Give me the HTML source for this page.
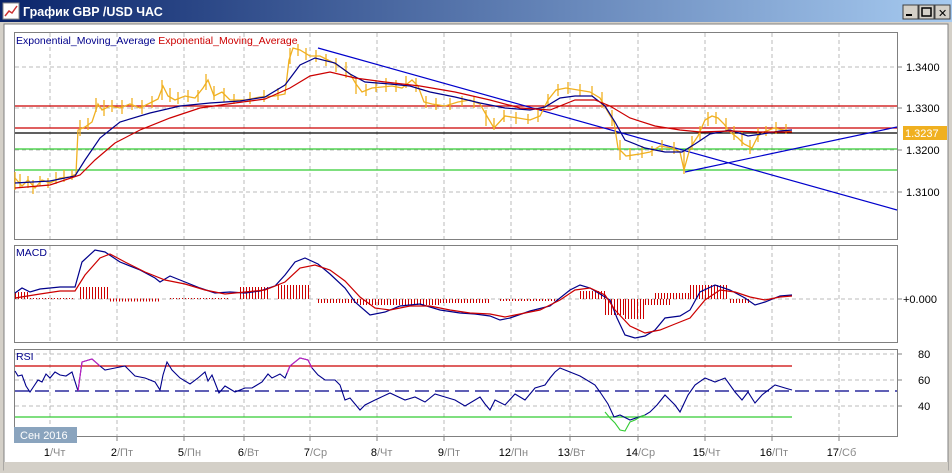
<!DOCTYPE html>
<html><head><meta charset="utf-8"><style>
body{margin:0;width:952px;height:473px;overflow:hidden;background:#d4d0c8;font-family:"Liberation Sans",sans-serif}
svg{position:absolute;left:0;top:0}
</style></head><body>
<svg width="952" height="473" viewBox="0 0 952 473" font-family="Liberation Sans, DejaVu Sans, sans-serif">
<defs><linearGradient id="tb" x1="0" x2="1"><stop offset="0" stop-color="#0a246a"/><stop offset="1" stop-color="#a6caf0"/></linearGradient></defs>
<rect x="0" y="0" width="952" height="473" fill="#d4d0c8"/>
<rect x="0" y="0" width="952" height="22" fill="url(#tb)"/>
<rect x="3" y="3" width="16" height="16" fill="#fff" stroke="#888"/>
<polyline points="5,16 9,11 12,13 17,6" fill="none" stroke="#c33" stroke-width="1.5"/>
<text x="23" y="16" fill="#fff" font-size="12.5" font-weight="bold">График GBP /USD  ЧАС</text>
<g font-size="11" font-weight="bold"><rect x="903" y="5" width="15" height="14" fill="#d4d0c8" stroke="#404040"/><rect x="906" y="14" width="6" height="2" fill="#000"/>
<rect x="919" y="5" width="15" height="14" fill="#d4d0c8" stroke="#404040"/><rect x="922" y="8" width="9" height="8" fill="none" stroke="#000" stroke-width="1.5"/>
<rect x="935" y="5" width="15" height="14" fill="#d4d0c8" stroke="#404040"/><text x="938" y="17">✕</text></g>
<rect x="4" y="24" width="944" height="446" fill="#fff" stroke="#808080"/>
<rect x="4" y="462" width="944" height="11" fill="#d4d0c8"/>
<g fill="#fff" stroke="#808080"><rect x="14.5" y="32.5" width="883" height="207"/><rect x="14.5" y="245.5" width="883" height="97"/><rect x="14.5" y="349.5" width="883" height="87"/></g>
<g stroke="#bbb" stroke-dasharray="4,3">
<path d="M50 33V239M117 33V239M184 33V239M244 33V239M310 33V239M377 33V239M444 33V239M511 33V239M570 33V239M638 33V239M705 33V239M772 33V239M839 33V239"/>
<path d="M50 246V342M117 246V342M184 246V342M244 246V342M310 246V342M377 246V342M444 246V342M511 246V342M570 246V342M638 246V342M705 246V342M772 246V342M839 246V342"/>
<path d="M50 350V436M117 350V436M184 350V436M244 350V436M310 350V436M377 350V436M444 350V436M511 350V436M570 350V436M638 350V436M705 350V436M772 350V436M839 350V436"/>
<path d="M15 67H897M15 108H897M15 150H897M15 192H897M15 299H897M15 354H897M15 380H897M15 406H897"/>
</g>
<g stroke="#808080"><path d="M897 67h5M897 108h5M897 150h5M897 192h5M897 299h5M897 354h5M897 380h5M897 406h5"/>
<path d="M50 437v4M117 437v4M184 437v4M244 437v4M310 437v4M377 437v4M444 437v4M511 437v4M570 437v4M638 437v4M705 437v4M772 437v4M839 437v4"/></g>
<g stroke-width="1.3"><path d="M15 106H897" stroke="#c00"/><path d="M15 128H897" stroke="#c00"/><path d="M15 133H897" stroke="#000"/><path d="M15 149H897" stroke="#3c3"/><path d="M15 170H897" stroke="#3c3"/></g>
<path d="M318 48L897 210M685 172L897 127" stroke="#00c" stroke-width="1.2" fill="none"/>
<g fill="none" stroke="#f0b020" stroke-width="1.3">
<polyline points="15,178 22,186 28,180 35,188 42,180 50,183 60,178 70,177 76,174 78,130 85,127 92,122 98,104 102,110 110,106 120,108 130,104 140,108 150,103 158,99 163,86 168,96 175,100 185,96 195,98 203,88 208,80 214,96 222,92 230,100 245,100 260,97 275,96 285,94 289,60 293,48 300,50 310,56 320,56 332,62 342,68 350,74 356,84 362,92 372,88 382,87 392,86 402,88 412,80 418,86 424,102 432,104 445,106 458,102 470,100 480,104 488,118 494,128 505,116 518,118 530,120 540,116 548,100 556,90 566,88 578,90 590,92 600,98 608,112 614,122 618,148 626,156 640,154 650,152 660,146 672,148 680,152 684,170 690,148 698,136 705,120 712,116 718,118 724,124 730,132 738,138 744,144 752,148 758,136 764,132 774,128 784,130 792,132"/>
<path d="M15 172v18M20 174v14M28 176v12M33 180v14M40 176v10M48 178v10M56 172v12M64 170v12M72 170v10M80 120v16M88 118v12M96 98v14M104 100v16M112 100v12M122 100v14M132 98v12M142 100v14M152 96v12M162 80v20M170 88v14M178 92v12M188 90v12M198 90v12M206 74v16M214 86v14M224 88v14M234 94v10M250 92v12M264 90v12M278 88v12M290 48v16M298 44v12M306 48v12M316 50v12M326 54v12M336 58v14M346 62v16M356 78v16M366 84v12M376 80v12M386 78v14M396 80v12M406 76v12M416 78v14M426 96v12M436 98v12M450 98v12M462 96v10M474 96v12M486 110v16M494 118v12M504 110v12M516 112v12M528 114v10M538 108v14M548 94v12M558 84v12M568 82v12M580 84v12M592 86v10M602 92v16M612 110v16M620 140v20M630 148v12M642 146v12M652 146v10M662 140v12M674 142v12M684 150v24M692 136v14M700 126v14M708 112v14M716 112v12M726 118v14M734 126v14M742 132v14M750 140v14M758 128v14M766 126v10M776 122v12M786 124v10"/>
</g>
<polyline fill="none" stroke="#00008b" stroke-width="1.2" points="15,183 50,181 75,176 85,160 100,138 120,122 150,113 180,106 210,103 240,101 265,97 285,85 300,65 315,58 335,63 350,74 365,82 390,84 410,86 430,92 455,97 480,103 505,108 530,110 545,107 560,98 575,96 592,96 605,106 615,122 625,140 645,148 665,152 682,152 695,144 710,134 730,130 748,136 762,134 780,131 792,130"/>
<polyline fill="none" stroke="#c00" stroke-width="1.2" points="15,188 50,185 80,175 95,160 115,143 140,130 170,118 200,108 235,103 265,99 290,88 310,76 330,72 355,78 385,82 420,86 455,92 490,100 520,108 550,110 575,100 595,100 610,106 630,118 655,126 680,130 700,132 730,131 760,132 792,132"/>
<text x="16" y="44" font-size="10.5" fill="#00008b">Exponential_Moving_Average <tspan fill="#c00">Exponential_Moving_Average</tspan></text>
<g font-size="11" fill="#000"><text x="906" y="71">1.3400</text><text x="906" y="112">1.3300</text><text x="906" y="154">1.3200</text><text x="906" y="196">1.3100</text><text x="903" y="303">+0.000</text><text x="918" y="358">80</text><text x="918" y="384">60</text><text x="918" y="410">40</text></g>
<rect x="903" y="126" width="44" height="14" fill="#f0b020"/><text x="905" y="137" font-size="11" fill="#fff">1.3237</text>
<text x="16" y="256" font-size="10.5" fill="#00008b">MACD</text>
<g stroke="#c00" stroke-dasharray="1,2" fill="none">
<path d="M15 295.5H28" stroke-width="7"/>
<path d="M30 298.5H75" stroke-width="1"/>
<path d="M80 293H108" stroke-width="12"/>
<path d="M110 300H160" stroke-width="3"/>
<path d="M170 298.5H230" stroke-width="1"/>
<path d="M240 293H270" stroke-width="12"/>
<path d="M278 292H310" stroke-width="14"/>
<path d="M318 301H360" stroke-width="4"/>
<path d="M360 302H440" stroke-width="6"/>
<path d="M440 301H490" stroke-width="4"/>
<path d="M500 300H560" stroke-width="2"/>
<path d="M580 295H605" stroke-width="8"/>
<path d="M605 307H625" stroke-width="16"/>
<path d="M625 309H645" stroke-width="20"/>
<path d="M645 302H670" stroke-width="6"/>
<path d="M655 296H690" stroke-width="6"/>
<path d="M690 292H728" stroke-width="14"/>
<path d="M730 301H750" stroke-width="4"/>
</g>
<polyline fill="none" stroke="#00008b" stroke-width="1.2" points="15,293 22,288 30,292 40,289 60,287 75,287 82,262 95,250 105,252 120,262 140,270 155,278 160,282 170,276 185,282 200,288 215,293 230,292 245,293 260,291 275,286 285,275 295,262 305,258 318,264 330,274 345,288 355,302 370,315 385,312 400,306 420,304 440,310 460,313 475,314 490,316 500,320 510,318 530,311 550,306 570,290 580,285 590,288 600,294 610,300 617,318 625,335 635,338 645,336 655,330 665,318 680,316 690,310 700,292 715,285 730,290 745,298 755,305 765,302 780,296 792,295"/>
<polyline fill="none" stroke="#c00" stroke-width="1.2" points="15,298 40,294 60,291 75,291 85,275 100,258 110,254 125,262 145,272 165,280 185,284 205,290 225,294 245,292 265,290 285,282 300,268 315,265 330,270 345,281 360,297 375,308 390,310 410,306 430,306 450,310 470,313 490,314 505,317 520,314 540,310 560,300 575,290 590,288 605,295 615,310 630,326 645,333 660,330 675,324 690,318 705,300 720,290 735,292 750,297 765,300 780,297 792,296"/>
<text x="16" y="360" font-size="10.5" fill="#00008b">RSI</text>
<path d="M15 366H792" stroke="#c00" stroke-width="1.2"/><path d="M15 417H792" stroke="#3c3" stroke-width="1.2"/>
<path d="M15 391H897" stroke="#00008b" stroke-width="1.3" stroke-dasharray="14,6"/>
<polyline fill="none" stroke="#00008b" stroke-width="1.1" points="15,371 18,376 22,375 26,386 30,392 34,386 38,380 42,382 46,374 50,378 55,372 60,375 66,376 72,372 78,391 82,362 92,359 100,366 105,370 115,368 125,366 135,376 145,378 155,382 160,390 163,375 167,362 172,370 180,378 190,384 198,378 205,372 208,381 212,375 219,393 225,386 235,392 245,388 252,388 262,382 268,374 272,378 280,374 285,378 290,366 300,358 308,360 312,368 318,375 325,380 335,380 340,385 345,400 350,398 355,404 360,410 365,405 375,400 390,393 405,400 415,397 425,402 435,394 445,397 455,400 465,406 480,397 485,404 490,410 495,400 505,405 515,394 525,400 535,388 545,385 550,378 555,372 560,368 570,372 580,376 590,382 595,385 600,392 608,404 614,417 620,415 630,420 645,415 650,412 657,405 665,395 675,405 680,412 688,395 695,385 705,378 715,382 725,378 735,392 742,400 748,392 755,403 762,395 775,385 785,388 792,390"/>
<polyline fill="none" stroke="#c020c0" stroke-width="1.1" points="78,391 82,362 92,359 100,366"/>
<polyline fill="none" stroke="#c020c0" stroke-width="1.1" points="287,373 290,366 300,358 308,360 312,368"/>
<polyline fill="none" stroke="#3c3" stroke-width="1.1" points="605,412 610,418 615,423 620,430 625,431 630,422 635,420 640,417 645,415"/>
<rect x="14" y="427" width="63" height="16" fill="#8aa4be"/><text x="20" y="439" font-size="11" fill="#fff">Сен 2016</text>
<g font-size="11" fill="#000"><text x="50" y="456" text-anchor="end">1</text><text x="117" y="456" text-anchor="end">2</text><text x="184" y="456" text-anchor="end">5</text><text x="244" y="456" text-anchor="end">6</text><text x="310" y="456" text-anchor="end">7</text><text x="377" y="456" text-anchor="end">8</text><text x="444" y="456" text-anchor="end">9</text><text x="511" y="456" text-anchor="end">12</text><text x="570" y="456" text-anchor="end">13</text><text x="638" y="456" text-anchor="end">14</text><text x="705" y="456" text-anchor="end">15</text><text x="772" y="456" text-anchor="end">16</text><text x="839" y="456" text-anchor="end">17</text></g>
<g font-size="11" fill="#888"><text x="50" y="456">/Чт</text><text x="117" y="456">/Пт</text><text x="184" y="456">/Пн</text><text x="244" y="456">/Вт</text><text x="310" y="456">/Ср</text><text x="377" y="456">/Чт</text><text x="444" y="456">/Пт</text><text x="511" y="456">/Пн</text><text x="570" y="456">/Вт</text><text x="638" y="456">/Ср</text><text x="705" y="456">/Чт</text><text x="772" y="456">/Пт</text><text x="839" y="456">/Сб</text></g>
</svg>
</body></html>
